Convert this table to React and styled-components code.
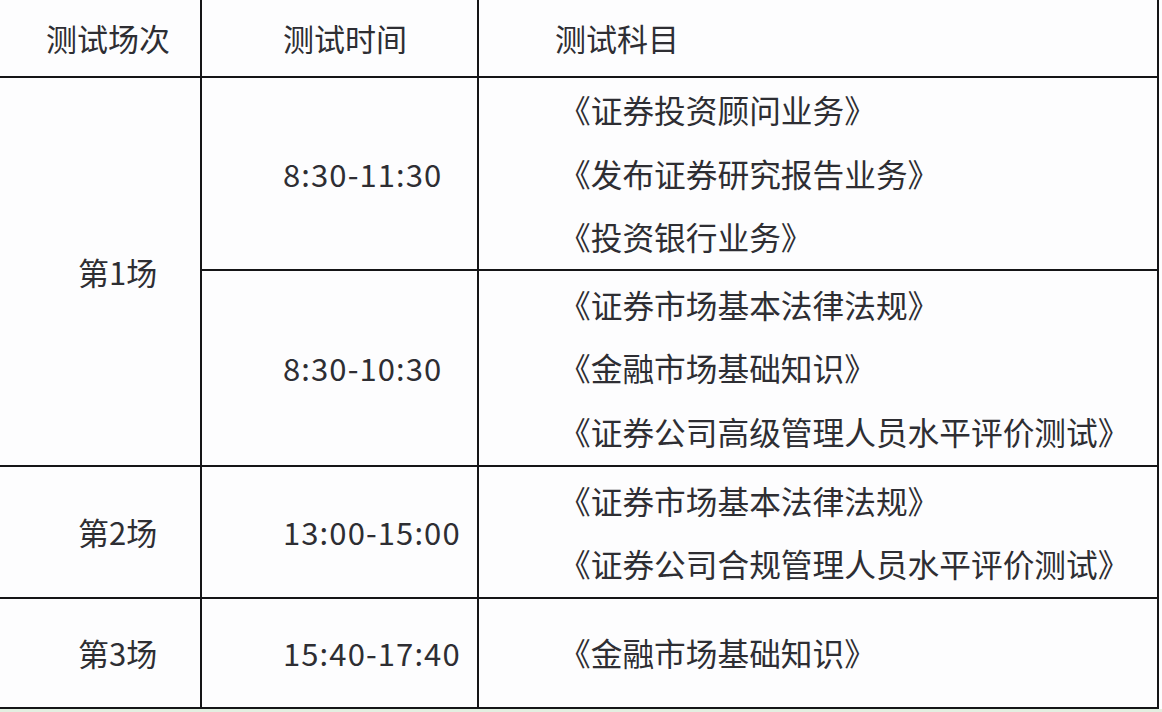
import React from "react";
import styled, { createGlobalStyle } from "styled-components";

const GlobalStyle = createGlobalStyle`
  body {
    margin: 0;
    background: #fdfdfe;
    font-family: "Noto Sans CJK SC", "Noto Sans", sans-serif;
    color: #2e2e33;
  }
`;

const Page = styled.div`
  width: 1162px;
  height: 712px;
  overflow: hidden;
  background: #fdfdfe;
  display: flex;
  flex-direction: column;
`;

const Table = styled.div`
  display: grid;
  grid-template-columns: 202px 277px 680px;
  grid-template-rows: 78px 193px 196px 132px 110px;
`;

const Cell = styled.div`
  border-right: 2px solid #151517;
  border-bottom: 2px solid #151517;
  display: flex;
  flex-direction: column;
  justify-content: center;
  padding-left: ${(p) => p.$pad}px;
  font-size: ${(p) => (p.$list ? "31.7px" : "31px")};
  line-height: 63.5px;
  white-space: nowrap;
  letter-spacing: ${(p) => (p.$time ? "1.1px" : "0")};
  grid-row: ${(p) => p.$rows || "auto"};
`;

const Line = styled.span`
  display: block;
`;

const Strip = styled.div`
  height: 3px;
  background: #e3efe1;
`;

const rows = [
  { time: "8:30-11:30", subjects: ["《证券投资顾问业务》", "《发布证券研究报告业务》", "《投资银行业务》"] },
  {
    time: "8:30-10:30",
    subjects: ["《证券市场基本法律法规》", "《金融市场基础知识》", "《证券公司高级管理人员水平评价测试》"],
  },
];

export default function App() {
  return (
    <Page>
      <GlobalStyle />
      <Table>
        <Cell $pad={46}>测试场次</Cell>
        <Cell $pad={81}>测试时间</Cell>
        <Cell $pad={76}>测试科目</Cell>

        <Cell $pad={78} $rows="span 2">第1场</Cell>
        {rows.map((r, i) => (
          <React.Fragment key={i}>
            <Cell $pad={81} $time>{r.time}</Cell>
            <Cell $pad={80} $list>
              {r.subjects.map((s) => (
                <Line key={s}>{s}</Line>
              ))}
            </Cell>
          </React.Fragment>
        ))}

        <Cell $pad={78}>第2场</Cell>
        <Cell $pad={81} $time>13:00-15:00</Cell>
        <Cell $pad={80} $list>
          <Line>《证券市场基本法律法规》</Line>
          <Line>《证券公司合规管理人员水平评价测试》</Line>
        </Cell>

        <Cell $pad={78}>第3场</Cell>
        <Cell $pad={81} $time>15:40-17:40</Cell>
        <Cell $pad={80} $list>
          <Line>《金融市场基础知识》</Line>
        </Cell>
      </Table>
      <Strip />
    </Page>
  );
}
